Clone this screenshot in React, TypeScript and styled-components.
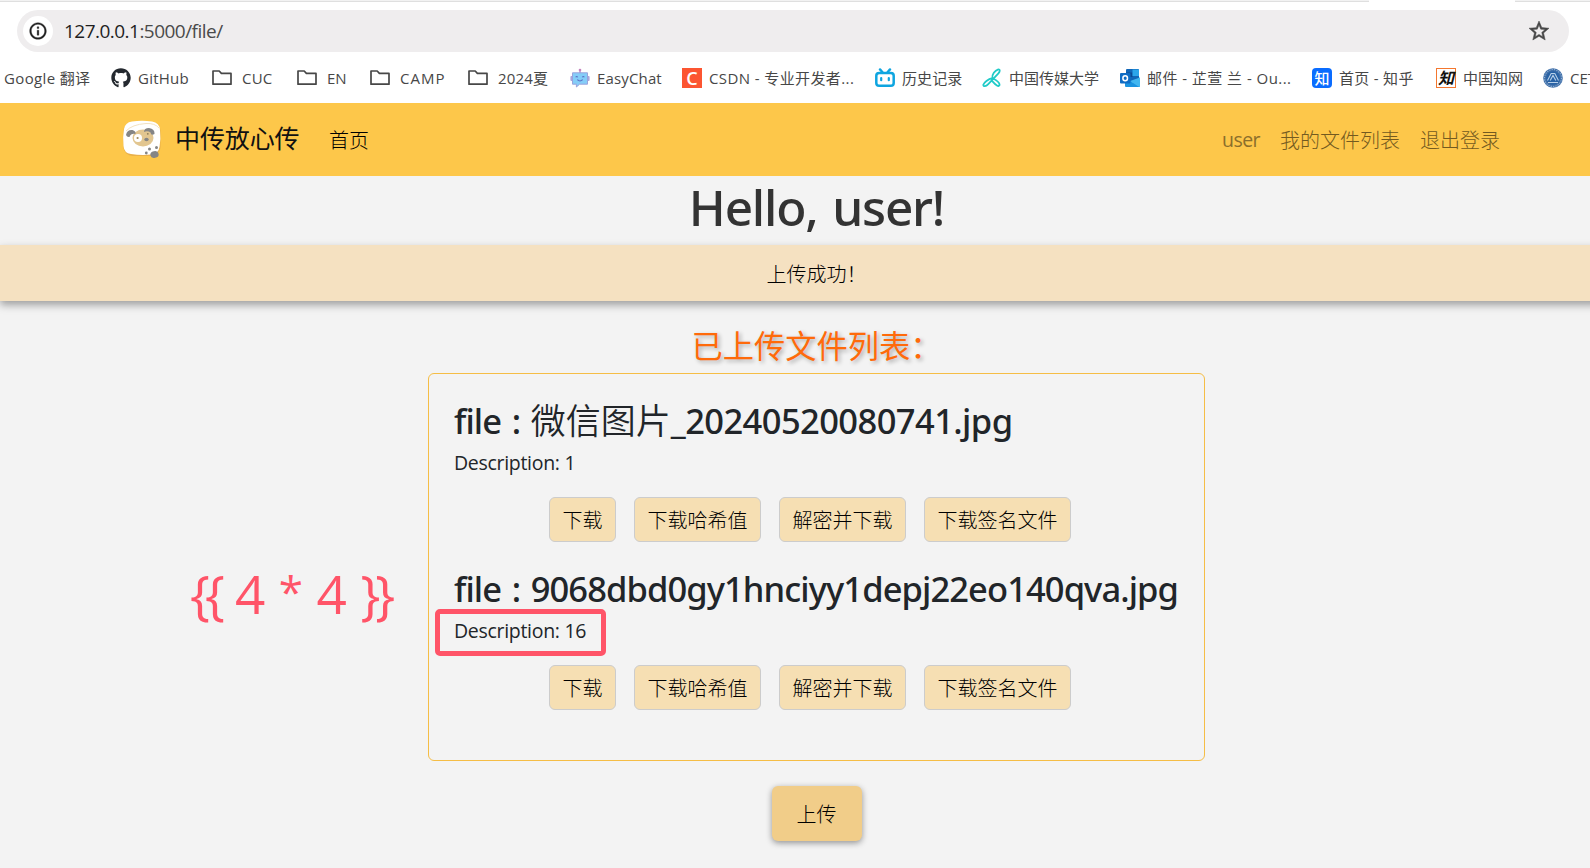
import React from "react";
import styled, { createGlobalStyle } from "styled-components";
import { FaGithub } from "react-icons/fa";
import { MdOutlineInfo, MdStarBorder } from "react-icons/md";

const GlobalStyle = createGlobalStyle`
  * { box-sizing: border-box; }
  body {
    margin: 0;
    background: #f3f3f3;
    font-family: "Open Sans", "Noto Sans CJK SC", sans-serif;
    color: #212529;
  }
`;

const Window = styled.div`
  position: relative;
  width: 1590px;
  height: 868px;
  overflow: hidden;
`;

/* Browser chrome */
const Chrome = styled.header`
  height: 103px;
  background: #fff;
  overflow: hidden;
`;

const TabStrip = styled.div`
  height: 2px;
  display: flex;
  padding-left: 1369px;
  background: #f2f2f2;
  border-bottom: 1px solid #dfdfdf;
`;

const ActiveTab = styled.div`
  width: 146px;
  height: 2px;
  flex: none;
  background: #fff;
`;

const AddressBar = styled.div`
  display: flex;
  align-items: center;
  width: 1552px;
  height: 42px;
  margin: 8px 0 0 17px;
  padding: 0 18px 0 6px;
  border-radius: 21px;
  background: #efedee;
`;

const SiteInfo = styled.div`
  display: flex;
  align-items: center;
  justify-content: center;
  width: 30px;
  height: 30px;
  border-radius: 50%;
  background: #fff;
  color: #1f1f1f;
  svg path:not([fill="none"]) { stroke: currentColor; stroke-width: 0.4; }
`;

const Url = styled.div`
  flex: 1;
  margin-left: 11px;
  font-size: 19px;
  line-height: 30px;
  letter-spacing: -0.53px;
  color: #4a4a4a;
`;

const Host = styled.span`
  color: #1f1f1f;
`;

const StarIcon = styled(MdStarBorder)`
  color: #474747;
  path:not([fill="none"]) { stroke: currentColor; stroke-width: 0.5; }
`;

const Bookmarks = styled.nav`
  display: flex;
  align-items: center;
  height: 51px;
  padding-left: 4px;
  gap: 21px;
`;

const Bookmark = styled.div<{ $gap?: number }>`
  display: flex;
  flex: none;
  align-items: center;
  gap: ${(p) => p.$gap ?? 7}px;
  svg { flex: none; }
`;

const BookmarkLabel = styled.span<{ $width: number; $spacing?: number }>`
  width: ${(p) => p.$width}px;
  font-size: 15px;
  line-height: 22px;
  letter-spacing: ${(p) => p.$spacing ?? 0}px;
  white-space: nowrap;
  color: #474747;
`;

const Tile = styled.span<{
  $bg: string;
  $color: string;
  $radius?: number;
  $border?: string;
  $size: number;
  $weight?: number;
  $slant?: boolean;
}>`
  display: flex;
  align-items: center;
  justify-content: center;
  width: 20px;
  height: 20px;
  border-radius: ${(p) => p.$radius ?? 0}px;
  border: ${(p) => p.$border ?? "none"};
  background: ${(p) => p.$bg};
  color: ${(p) => p.$color};
  font-size: ${(p) => p.$size}px;
  font-weight: ${(p) => p.$weight ?? 700};
  font-style: ${(p) => (p.$slant ? "italic" : "normal")};
  line-height: 18px;
`;

/* Site */
const Site = styled.div`
  display: flex;
  flex-direction: column;
  align-items: center;
  width: 1633px;
`;

const Navbar = styled.nav`
  display: flex;
  align-items: center;
  width: 100%;
  height: 73px;
  padding: 0 133px 0 122px;
  background: #fdc74a;
`;

const Brand = styled.span`
  margin: -4px 0 0 12px;
  width: 126px;
  font-size: 25px;
  line-height: 38px;
  letter-spacing: -0.1px;
  color: #111;
`;

const NavLink = styled.a<{ $muted?: boolean; $gap: number }>`
  margin-left: ${(p) => p.$gap}px;
  padding-top: 2px;
  font-size: 20px;
  font-weight: 300;
  line-height: 30px;
  color: ${(p) => (p.$muted ? "#735a20" : "#000")};
`;

const UserLink = styled(NavLink)`
  margin-left: auto;
  padding-top: 1px;
  font-size: 19.5px;
  font-weight: 400;
  letter-spacing: -0.55px;
  color: #8b6e2b;
`;

const Greeting = styled.h1`
  height: 69px;
  margin: 0;
  font: 500 49.5px/62px "Noto Sans", sans-serif;
  letter-spacing: -1.2px;
  word-spacing: 3px;
  color: #333;
`;

const Flash = styled.div`
  width: 100%;
  height: 56px;
  font-size: 20px;
  font-weight: 300;
  line-height: 59px;
  text-align: center;
  color: #000;
  background: #f5e1c1;
  box-shadow: 0 4px 8px rgba(0, 0, 0, 0.35);
`;

const ListTitle = styled.h2`
  height: 72px;
  margin: 0;
  padding-top: 22px;
  font-size: 31.25px;
  font-weight: 400;
  line-height: 46px;
  color: #ff6a0a;
  text-shadow: 2px 2px 4px rgba(0, 0, 0, 0.3);
`;

const Card = styled.section`
  width: 777px;
  height: 388px;
  padding: 26px 26px 26px 25px;
  border: 1px solid #f5bd45;
  border-radius: 6px;
`;

const FileItem = styled.article`
  height: 168px;
`;

const FileName = styled.h3`
  margin: 0;
  font: 500 34.5px/42px "Noto Sans", "Noto Sans CJK SC", sans-serif;
  letter-spacing: -0.91px;
  word-spacing: 2.5px;
  white-space: nowrap;
`;

const Stem = styled.span`
  letter-spacing: -0.58px;
`;

const Cjk = styled.span`
  font-size: 35px;
  font-weight: 350;
  letter-spacing: 0;
`;

const Description = styled.p`
  margin: 6px 0 19px;
  font-size: 19.5px;
  line-height: 30px;
  letter-spacing: -0.3px;
`;

const Actions = styled.div`
  display: flex;
  justify-content: center;
  gap: 18px;
  padding-right: 12px;
`;

const ActionButton = styled.button`
  height: 45px;
  padding: 1px 12.5px 0;
  border: 1px solid #ccc;
  border-radius: 6px;
  background: #f6dfb3;
  font: 300 20px/30px "Noto Sans CJK SC", sans-serif;
  color: #000;
`;

const UploadButton = styled.button`
  width: 90px;
  height: 55px;
  margin-top: 25px;
  border: 0;
  border-radius: 6px;
  background: #f1cd89;
  font: 300 20px/30px "Noto Sans CJK SC", sans-serif;
  color: #000;
  box-shadow: 0 2px 6px rgba(0, 0, 0, 0.4);
`;

/* Markup laid over the page */
const Highlight = styled.div`
  position: absolute;
  left: 435px;
  top: 609px;
  width: 171px;
  height: 47px;
  border: 5px solid #ff5468;
  border-radius: 5px;
`;

const Note = styled.div`
  position: absolute;
  left: 190px;
  top: 557px;
  font-size: 53px;
  line-height: 74px;
  letter-spacing: -1.6px;
  word-spacing: 3px;
  white-space: nowrap;
  color: #ff5468;
`;

const Braces = styled.span`
  letter-spacing: -5px;
`;

const Star = styled.span`
  font-size: 44px;
  line-height: 1;
  vertical-align: 6px;
`;

const FolderIcon = () => (
  <svg width="20" height="20" viewBox="0 0 20 20" fill="none" stroke="#474747" strokeWidth="1.7" strokeLinejoin="round">
    <path d="M1 16V3h6.2l2.2 2.4H19V16.2H1z" />
  </svg>
);

const RobotIcon = () => (
  <svg width="20" height="20" viewBox="0 0 20 20">
    <path d="M10 2.5V5" stroke="#b88bc8" strokeWidth="1.4" />
    <circle cx="10" cy="2" r="1.3" fill="#c583bd" />
    <rect x="0.4" y="8" width="3" height="5" rx="1" fill="#a9a6dc" />
    <rect x="16.6" y="8" width="3" height="5" rx="1" fill="#a9a6dc" />
    <path d="M2.500 4.800h15v11.400H9.600L6.400 19v-2.800H2.500z" fill="#84cdf8" stroke="#9aa3dc" strokeWidth="1" />
    <path d="M5.700 9.300q1-1.600 2 0M12.300 9.300q1-1.600 2 0M7.300 11.700q2.700 2.600 5.400 0" fill="none" stroke="#5c70c4" strokeWidth="1.100" />
  </svg>
);

const TvIcon = () => (
  <svg width="20" height="20" viewBox="0 0 20 20" fill="none" stroke="#0ea5e0" strokeLinecap="round">
    <path d="M5 1.400l2.500 2.800M15 1.400l-2.500 2.800" strokeWidth="2.400" />
    <rect x="1.300" y="5" width="17.400" height="12.800" rx="2.800" strokeWidth="2.500" />
    <path d="M6.200 10v2.200M13.800 10v2.200" strokeWidth="2.200" />
  </svg>
);

const UniversityIcon = () => (
  <svg width="20" height="20" viewBox="0 0 20 20" fill="none" stroke="#20cbc8" strokeWidth="1.800" strokeLinecap="round" strokeLinejoin="round">
    <path d="M10.400 10C9.800 6.600 12.800 2.400 16.300 1.300C18.600 1.400 17.800 4 16.200 5.600L6 16.400C4 18.600 1 18.800 1.300 16.700C2 14.500 6 11.200 10.400 10.200C14 11.800 17.600 14.300 17.600 17C16.600 19.400 14 17.300 10 12.800" />
  </svg>
);

const OutlookIcon = () => (
  <svg width="20" height="20" viewBox="0 0 20 20">
    <rect x="6" y="1" width="13" height="13" rx="1" fill="#1066b8" />
    <path d="M6 4.500h6.500V9H6z" fill="#0a4a94" />
    <path d="M12.500 1.500H19V8h-6.500z" fill="#2ba5ea" />
    <path d="M5 10l7.500 4.300L20 9.500V18a1 1 0 0 1-1 1H6a1 1 0 0 1-1-1z" fill="#1a93e0" />
    <path d="M20 9.500V18a1 1 0 0 1-.8.9L10 13z" fill="#41b6f0" />
    <rect x="0" y="5" width="10.500" height="10.500" rx="1" fill="#0f6cc4" />
    <ellipse cx="5.200" cy="10.200" rx="2.300" ry="2.500" fill="none" stroke="#fff" strokeWidth="1.500" />
  </svg>
);

const SealIcon = () => (
  <svg width="20" height="20" viewBox="0 0 20 20" fill="none">
    <circle cx="10" cy="10" r="9.800" fill="#3f6ea8" />
    <circle cx="10" cy="10" r="8.500" stroke="#8fb0d4" strokeWidth="1.200" strokeDasharray="1.200 1.200" />
    <circle cx="10" cy="10" r="6.800" fill="#2862a5" />
    <path d="M4.500 12.500l3.700-7h3.600l3.700 7M7.200 12.500l2.800-5 2.800 5M5 14.500h10" stroke="#b7cfe8" strokeWidth="1.100" />
  </svg>
);

const LogoIcon = () => (
  <svg width="41" height="40" viewBox="0 0 41 40">
    <rect x="1.500" y="2" width="37" height="34" rx="9" fill="#e9b04a" />
    <path d="M10 1.500Q20 0 30 1.500Q37.500 2.500 38 10Q39 19 37.500 27Q36.500 34 29 34.500Q19 35.500 9 34Q2 33 1.500 26Q.5 17 2 9Q3 2.500 10 1.500z" fill="#fff" />
    <path d="M4 11Q10 4.500 24 3.500Q33 3 37 8" fill="none" stroke="#efd9b0" strokeWidth="0.800" />
    <ellipse cx="21" cy="18" rx="10.500" ry="8.500" fill="#e2c690" />
    <path d="M4 15Q5 9.500 10.500 10Q14 11 13.500 14Q9 13 7.500 17Q5 17.500 4 15zM22 12Q22 8 27 8Q33 9 32.500 14Q29 16 28.500 12.500Q25.500 10.500 22 12z" fill="#858585" />
    <circle cx="16" cy="18" r="4" fill="#fff" />
    <circle cx="15.600" cy="18" r="1.100" fill="#a18b5b" />
    <circle cx="25.800" cy="13.800" r="0.900" fill="#8d7b56" />
    <ellipse cx="24.500" cy="19.500" rx="2.200" ry="1.700" fill="#858585" />
    <circle cx="27.500" cy="29" r="1.500" fill="#858585" />
    <circle cx="34.500" cy="27.500" r="1.500" fill="#858585" />
    <circle cx="24.300" cy="33" r="1.400" fill="#858585" />
    <ellipse cx="32.500" cy="34.500" rx="4.200" ry="3.300" fill="#858585" transform="rotate(-12 32.500 34.500)" />
  </svg>
);

type BookmarkData = { label: string; width: number; spacing?: number; gap?: number; icon?: React.ReactNode };

const bookmarks: BookmarkData[] = [
  { label: "Google 翻译", width: 86, spacing: 0.35 },
  { label: "GitHub", width: 53, spacing: 0.25, icon: <FaGithub size={20} color="#24292f" /> },
  { label: "CUC", width: 34, spacing: 0.2, gap: 10, icon: <FolderIcon /> },
  { label: "EN", width: 22, gap: 10, icon: <FolderIcon /> },
  { label: "CAMP", width: 47, spacing: 1, gap: 10, icon: <FolderIcon /> },
  { label: "2024夏", width: 51, spacing: 0.2, gap: 10, icon: <FolderIcon /> },
  { label: "EasyChat", width: 64, spacing: 0.15, icon: <RobotIcon /> },
  {
    label: "CSDN - 专业开发者...",
    width: 145,
    spacing: 0.4,
    icon: <Tile $bg="#fc5531" $color="#fff" $size={18} $weight={600}>C</Tile>,
  },
  { label: "历史记录", width: 59, spacing: 0.1, icon: <TvIcon /> },
  { label: "中国传媒大学", width: 90, icon: <UniversityIcon /> },
  { label: "邮件 - 芷萱 兰 - Ou...", width: 144, spacing: 0.45, icon: <OutlookIcon /> },
  {
    label: "首页 - 知乎",
    width: 76,
    spacing: 0.3,
    icon: <Tile $bg="#0a6cff" $color="#fff" $radius={4} $size={15} $weight={500}>知</Tile>,
  },
  {
    label: "中国知网",
    width: 59,
    icon: <Tile $bg="#fff" $color="#111" $border="1px solid #f4772e" $size={16} $slant>知</Tile>,
  },
  { label: "CET", width: 40, icon: <SealIcon /> },
];

const actions = ["下载", "下载哈希值", "解密并下载", "下载签名文件"];

const FileActions = () => (
  <Actions>
    {actions.map((label) => (
      <ActionButton key={label}>{label}</ActionButton>
    ))}
  </Actions>
);

export default function App() {
  return (
    <Window>
      <GlobalStyle />
      <Chrome>
        <TabStrip>
          <ActiveTab />
        </TabStrip>
        <AddressBar>
          <SiteInfo>
            <MdOutlineInfo size={20} />
          </SiteInfo>
          <Url>
            <Host>127.0.0.1</Host>:5000/file/
          </Url>
          <StarIcon size={24} />
        </AddressBar>
        <Bookmarks>
          {bookmarks.map((b) => (
            <Bookmark key={b.label} $gap={b.gap}>
              {b.icon}
              <BookmarkLabel $width={b.width} $spacing={b.spacing}>
                {b.label}
              </BookmarkLabel>
            </Bookmark>
          ))}
        </Bookmarks>
      </Chrome>
      <Site>
        <Navbar>
          <LogoIcon />
          <Brand>中传放心传</Brand>
          <NavLink $gap={28}>首页</NavLink>
          <UserLink $muted $gap={0}>user</UserLink>
          <NavLink $muted $gap={20}>我的文件列表</NavLink>
          <NavLink $muted $gap={20}>退出登录</NavLink>
        </Navbar>
        <Greeting>Hello, user!</Greeting>
        <Flash>上传成功！</Flash>
        <ListTitle>已上传文件列表：</ListTitle>
        <Card>
          <FileItem>
            <FileName>
              file : <Cjk>微信图片</Cjk>
              <Stem>_20240520080741.jpg</Stem>
            </FileName>
            <Description>Description: 1</Description>
            <FileActions />
          </FileItem>
          <FileItem>
            <FileName>file : 9068dbd0gy1hnciyy1depj22eo140qva.jpg</FileName>
            <Description>Description: 16</Description>
            <FileActions />
          </FileItem>
        </Card>
        <UploadButton>上传</UploadButton>
      </Site>
      <Highlight />
      <Note>
        <Braces>{"{{"}</Braces> 4 <Star>*</Star> 4 <Braces>{"}}"}</Braces>
      </Note>
    </Window>
  );
}
